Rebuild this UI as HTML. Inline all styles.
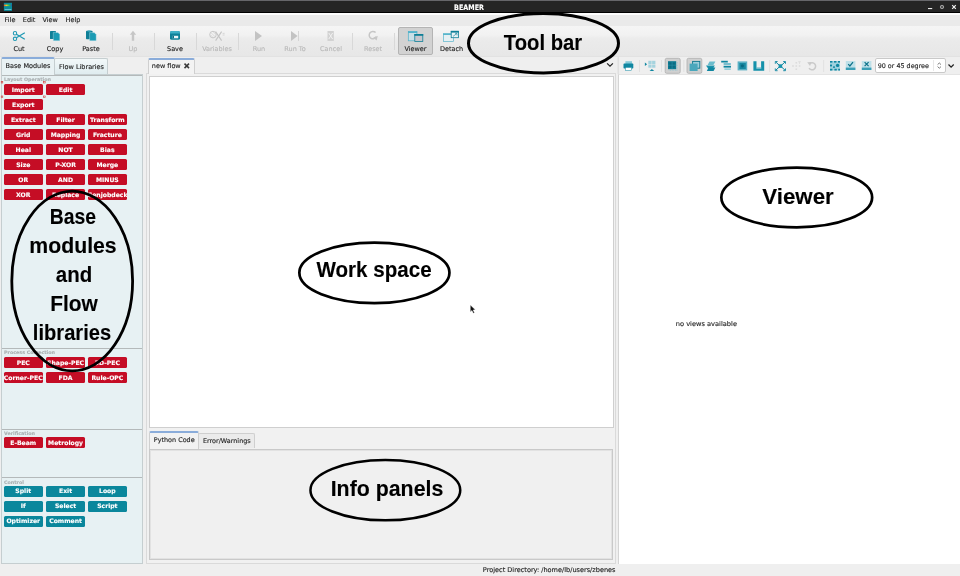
<!DOCTYPE html>
<html><head><meta charset="utf-8"><title>BEAMER</title>
<style>
html,body{margin:0;padding:0;}
body{will-change:transform;width:960px;height:576px;overflow:hidden;position:relative;background:#efefef;font-family:"DejaVu Sans","Liberation Sans",sans-serif;font-size:6.5px;color:#1c1c1c;-webkit-text-stroke:0.12px currentColor;}
.a{position:absolute;}
.t{position:absolute;white-space:nowrap;line-height:8px;}
.c{text-align:center;}
#title{left:0;top:0;width:960px;height:12.8px;background:#252525;border-top:1px solid #66666a;border-bottom:1px solid #000;box-sizing:border-box;}
#menubar{left:0;top:12.8px;width:960px;height:13px;background:#eaeaea;border-top:2px solid #fdfdfd;box-sizing:border-box;}
.tb{position:absolute;top:45px;width:36px;text-align:center;line-height:8px;font-size:6.5px;color:#222;}
.tb.d{color:#b9b9b9;}
.sep{position:absolute;top:33px;width:1px;height:17px;background:#d8d8d8;}
.mb{position:absolute;width:38.5px;height:11px;border-radius:1.5px;background:#c50d25;color:#fff;font-weight:bold;font-size:6.1px;line-height:11.5px;display:flex;justify-content:center;white-space:nowrap;overflow:hidden;}
.mb.tl{background:#0a879c;height:11px;line-height:10.8px;}
.sl{position:absolute;left:4px;font-size:4.8px;font-weight:bold;color:#aab0b2;line-height:6px;white-space:nowrap;}
.hr{position:absolute;left:2px;width:139.6px;height:1.1px;background:#b4b9ba;}
.lab{position:absolute;font-family:"Liberation Sans",sans-serif;font-weight:bold;color:#000;white-space:nowrap;text-align:center;}
</style></head><body>
<!-- title bar -->
<div class="a" id="title"></div>
<div class="t" style="left:438.8px;top:3.9px;width:60px;text-align:center;color:#fff;font-weight:bold;font-size:7.4px;transform:scaleX(0.865);">BEAMER</div>
<!-- menubar -->
<div class="a" id="menubar"></div>
<div class="t" style="left:4.5px;top:16px;">File</div>
<div class="t" style="left:22.8px;top:16px;">Edit</div>
<div class="t" style="left:42.5px;top:16px;">View</div>
<div class="t" style="left:65.5px;top:16px;">Help</div>
<!-- toolbar -->
<div class="a" id="toolbar" style="left:0;top:25.8px;width:960px;height:31px;background:linear-gradient(#f5f5f5 0%,#f2f2f2 28%,#ececec 40%,#eaeaea 52%,#e7e7e7 100%);"></div>
<div class="a" style="left:398px;top:27px;width:35px;height:28px;background:#d2d2d2;border:1px solid #b4b4b4;border-radius:2px;box-sizing:border-box;"></div>
<div class="tb" style="left:1px;">Cut</div>
<div class="tb" style="left:37px;">Copy</div>
<div class="tb" style="left:73px;">Paste</div>
<div class="sep" style="left:112px;"></div>
<div class="tb d" style="left:115px;">Up</div>
<div class="sep" style="left:154px;"></div>
<div class="tb" style="left:157px;">Save</div>
<div class="sep" style="left:196px;"></div>
<div class="tb d" style="left:199px;">Variables</div>
<div class="sep" style="left:238px;"></div>
<div class="tb d" style="left:241px;">Run</div>
<div class="tb d" style="left:277px;">Run To</div>
<div class="tb d" style="left:313px;">Cancel</div>
<div class="sep" style="left:352px;"></div>
<div class="tb d" style="left:355px;">Reset</div>
<div class="sep" style="left:394px;"></div>
<div class="tb" style="left:397.5px;">Viewer</div>
<div class="tb" style="left:433.5px;">Detach</div>

<!-- left panel -->
<div class="a" id="lpanel" style="left:1px;top:73.6px;width:141.6px;height:490.6px;background:#e7f1f3;border:1px solid #c5ced0;box-sizing:border-box;"></div>
<div class="a" style="left:54px;top:58.4px;width:54.4px;height:15.4px;background:linear-gradient(#f2f8f9,#dfecef);border:1px solid #c5ced0;border-bottom:none;border-radius:2px 2px 0 0;box-sizing:border-box;"></div>
<div class="a" style="left:1px;top:57.3px;width:54px;height:17.4px;background:#e9f2f4;border:1px solid #c5ced0;border-top:2px solid #8aacda;border-bottom:none;border-radius:2px 2px 0 0;box-sizing:border-box;"></div>
<div class="t" style="left:5.5px;top:61.5px;">Base Modules</div>
<div class="t" style="left:59px;top:62.5px;">Flow Libraries</div>

<div class="hr" style="top:75px;"></div>
<div class="sl" style="top:76.7px;">Layout Operation</div>
<div class="mb" style="left:4px;top:83.7px;">Import</div>
<div class="mb" style="left:46.3px;top:83.7px;">Edit</div>
<div class="mb" style="left:4px;top:98.7px;">Export</div>
<div class="mb" style="left:4px;top:113.7px;">Extract</div>
<div class="mb" style="left:46.3px;top:113.7px;">Filter</div>
<div class="mb" style="left:88.1px;top:113.7px;">Transform</div>
<div class="mb" style="left:4px;top:128.7px;">Grid</div>
<div class="mb" style="left:46.3px;top:128.7px;">Mapping</div>
<div class="mb" style="left:88.1px;top:128.7px;">Fracture</div>
<div class="mb" style="left:4px;top:143.7px;">Heal</div>
<div class="mb" style="left:46.3px;top:143.7px;">NOT</div>
<div class="mb" style="left:88.1px;top:143.7px;">Bias</div>
<div class="mb" style="left:4px;top:158.7px;">Size</div>
<div class="mb" style="left:46.3px;top:158.7px;">P-XOR</div>
<div class="mb" style="left:88.1px;top:158.7px;">Merge</div>
<div class="mb" style="left:4px;top:173.7px;">OR</div>
<div class="mb" style="left:46.3px;top:173.7px;">AND</div>
<div class="mb" style="left:88.1px;top:173.7px;">MINUS</div>
<div class="mb" style="left:4px;top:188.7px;">XOR</div>
<div class="mb" style="left:46.3px;top:188.7px;">Replace</div>
<div class="mb" style="left:88.1px;top:188.7px;">Genjobdeck</div>

<div class="hr" style="top:348px;"></div>
<div class="sl" style="top:350px;">Process Correction</div>
<div class="mb" style="left:4px;top:356.7px;">PEC</div>
<div class="mb" style="left:46.3px;top:356.7px;">Shape-PEC</div>
<div class="mb" style="left:88.1px;top:356.7px;">3D-PEC</div>
<div class="mb" style="left:4px;top:371.7px;">Corner-PEC</div>
<div class="mb" style="left:46.3px;top:371.7px;">FDA</div>
<div class="mb" style="left:88.1px;top:371.7px;">Rule-OPC</div>

<div class="hr" style="top:429px;"></div>
<div class="sl" style="top:431px;">Verification</div>
<div class="mb" style="left:4px;top:437.3px;">E-Beam</div>
<div class="mb" style="left:46.3px;top:437.3px;">Metrology</div>

<div class="hr" style="top:477.3px;"></div>
<div class="sl" style="top:479.5px;">Control</div>
<div class="mb tl" style="left:4px;top:486.1px;">Split</div>
<div class="mb tl" style="left:46.3px;top:486.1px;">Exit</div>
<div class="mb tl" style="left:88.1px;top:486.1px;">Loop</div>
<div class="mb tl" style="left:4px;top:501.1px;">If</div>
<div class="mb tl" style="left:46.3px;top:501.1px;">Select</div>
<div class="mb tl" style="left:88.1px;top:501.1px;">Script</div>
<div class="mb tl" style="left:4px;top:516.1px;">Optimizer</div>
<div class="mb tl" style="left:46.3px;top:516.1px;">Comment</div>

<!-- workspace -->
<div class="a" style="left:146px;top:73px;width:470.4px;height:491px;border:1px solid #dadada;box-sizing:border-box;background:#f1f1f1;"></div>
<div class="a" style="left:148px;top:57.8px;width:47px;height:16.2px;background:#f3f3f3;border:1px solid #cfcfcf;border-top:2px solid #8aacda;border-bottom:none;border-radius:2px 2px 0 0;box-sizing:border-box;"></div>
<div class="t" style="left:151.8px;top:61.5px;">new flow</div>
<div class="a" id="canvas" style="left:148.5px;top:75.8px;width:465.1px;height:352.4px;background:#fff;border:1.2px solid #cfcfcf;box-sizing:border-box;"></div>

<!-- info panel -->
<div class="a" style="left:198px;top:433px;width:56.5px;height:15px;background:#ebebeb;border:1px solid #cfcfcf;border-bottom:none;border-radius:2px 2px 0 0;box-sizing:border-box;"></div>
<div class="a" style="left:148.5px;top:431.2px;width:50.2px;height:18px;background:#f2f2f2;border:1px solid #cfcfcf;border-top:2px solid #8aacda;border-bottom:none;border-radius:2px 2px 0 0;box-sizing:border-box;"></div>
<div class="t" style="left:153.8px;top:436px;font-size:6.45px;">Python Code</div>
<div class="t" style="left:203px;top:436.8px;font-size:6.45px;">Error/Warnings</div>
<div class="a" style="left:148.6px;top:448.6px;width:464.6px;height:111.6px;background:#f0f0f0;border:1.4px solid #c9c9c9;box-sizing:border-box;box-shadow:inset 0 0 0 1px #e2e2e2;"></div>

<!-- viewer -->
<div class="a" id="viewer" style="left:617.6px;top:73.6px;width:343px;height:490.6px;background:#fff;border-left:1.4px solid #d4d4d4;border-top:1px solid #e4e4e4;box-sizing:border-box;"></div>
<div class="a" style="left:0;top:56.4px;width:960px;height:0.8px;background:#e2e2e2;"></div>
<div class="t" style="left:675.8px;top:319.8px;font-size:6.65px;">no views available</div>
<div class="a" style="left:875px;top:58px;width:70.5px;height:15px;background:#fff;border:1px solid #c9c9c9;border-radius:2px;box-sizing:border-box;"></div>
<div class="t" style="left:877.7px;top:61.5px;font-size:6.4px;">90 or 45 degree</div>

<!-- status -->
<div class="t" style="left:482.8px;top:566px;font-size:6.55px;">Project Directory: /home/lb/users/zbenes</div>


<!-- icons -->
<svg class="a" style="left:0;top:0;" width="960" height="576" viewBox="0 0 960 576">
<!-- app icon -->
<defs><linearGradient id="rb" x1="0" x2="1" y1="0" y2="0"><stop offset="0" stop-color="#e8402a"/><stop offset="0.3" stop-color="#f0d020"/><stop offset="0.65" stop-color="#30c040"/><stop offset="1" stop-color="#2050c0"/></linearGradient></defs>
<rect x="3.9" y="2.8" width="8.1" height="8.1" fill="#0a8b9c"/>
<rect x="3.9" y="4.6" width="8.1" height="1.5" fill="url(#rb)"/>
<rect x="4.6" y="9" width="6.8" height="0.9" fill="#6cc3d0"/>
<!-- window controls -->
<rect x="928" y="8" width="4.2" height="1.1" fill="#e8e8e8"/>
<circle cx="942" cy="7" r="1.7" fill="#555" stroke="#a0a0a0" stroke-width="1"/>
<path d="M952.2 5.2 L955.8 8.8 M955.8 5.2 L952.2 8.8" stroke="#f0f0f0" stroke-width="1.2" fill="none"/>
<!-- cut -->
<g fill="none" stroke="#1c98b3" stroke-width="1.05">
<circle cx="15" cy="33.2" r="1.7"/><circle cx="15" cy="38.8" r="1.7"/>
<path d="M16.4 34.3 L24.8 39.3 M16.4 37.7 L24.8 32.7" stroke-width="1.2"/>
</g>
<!-- copy -->
<rect x="50" y="31" width="6" height="8" rx="0.6" fill="#0f7f97"/>
<path d="M53.3 32.4 h4.6 l1.9 1.9 v6.4 h-6.5 z" fill="#1b9bb4" stroke="#dfeef2" stroke-width="0.35"/>
<!-- paste -->
<rect x="86" y="30.8" width="6.6" height="8.4" rx="0.8" fill="#0f7f97"/>
<rect x="87.6" y="30.4" width="3" height="1.3" fill="#37a9c0"/>
<path d="M89.6 32.6 h4.7 l1.9 1.9 v6.3 h-6.6 z" fill="#1b9bb4" stroke="#dfeef2" stroke-width="0.35"/>
<!-- up -->
<path d="M133 30.8 L136.2 34.8 L134.2 34.8 L134.2 40.8 L131.8 40.8 L131.8 34.8 L129.8 34.8 Z" fill="#c6c6c6"/>
<!-- save -->
<rect x="170" y="31" width="10" height="8.8" rx="1.6" fill="#0e8198"/>
<path d="M171.6 31 h6.8 a1.6 1.6 0 0 1 1.6 1.6 v0.9 h-10 v-0.9 a1.6 1.6 0 0 1 1.6 -1.6z" fill="#3fb0c6"/>
<rect x="172.4" y="35.8" width="5.8" height="2.5" fill="#eef6f8"/>
<rect x="172.4" y="35.8" width="1.6" height="2.5" fill="#0a6f86"/>
<!-- variables -->
<g fill="none" stroke="#c4c4c4">
<circle cx="213" cy="34.6" r="3.3" stroke-width="0.9"/>
<path d="M210.8 32.5 L215.2 36.8 M210.3 34.6 L213 37.6 M212.8 31.6 L216 34.6" stroke-width="0.5"/>
<path d="M215.6 31.6 L221.6 40.6 M221.6 31.6 L215.6 40.6" stroke-width="1.1"/>
<path d="M222.6 33.4 h2 M222.6 35 h2" stroke-width="0.6"/>
</g>
<!-- run -->
<path d="M255 31 L262 36 L255 41 Z" fill="#c3c3c3"/>
<!-- run to -->
<path d="M291 31 L297.6 36 L291 41 Z" fill="#c3c3c3"/>
<rect x="298.2" y="31" width="0.8" height="10" fill="#cfcfcf"/>
<!-- cancel -->
<rect x="327.5" y="31" width="6.3" height="10" fill="#d2d2d2"/>
<path d="M328.8 33 L332.6 39 M332.6 33 L328.8 39" stroke="#f2f2f2" stroke-width="1" fill="none"/>
<!-- reset -->
<path d="M375.6 32.6 A3.7 3.7 0 1 0 376.3 36.6" fill="none" stroke="#c6c6c6" stroke-width="1.5"/>
<path d="M373.2 37.6 L377.8 36 L376.6 40.6 Z" fill="#c6c6c6"/>
<!-- viewer icon -->
<rect x="408.3" y="31.6" width="8.6" height="9.2" fill="#c9dfe6" stroke="#4fb0c8" stroke-width="0.7"/>
<rect x="408" y="31.3" width="9.2" height="1.7" fill="#52b3cb"/>
<rect x="414.8" y="34.4" width="8" height="7" fill="#c6c6cc" stroke="#0e7f97" stroke-width="0.8"/>
<rect x="414.4" y="34" width="8.8" height="1.8" fill="#0e7f97"/>
<!-- detach icon -->
<rect x="443.4" y="33.8" width="10.2" height="7.6" fill="#e6f0f3" stroke="#5ab6cc" stroke-width="0.7"/>
<rect x="443" y="33.4" width="11" height="1.6" fill="#5ab6cc"/>
<rect x="451.2" y="31.3" width="7.2" height="6.4" fill="#e9f3f6" stroke="#0e7f97" stroke-width="0.8"/>
<rect x="450.8" y="30.9" width="8" height="1.7" fill="#0e7f97"/>
<path d="M453 36.4 L456.8 33.6 M455 33.4 h2 v2" stroke="#0e7f97" stroke-width="0.6" fill="none"/>

<!-- viewer toolbar icons -->
<!-- print -->
<rect x="625.4" y="61.2" width="6.6" height="2.8" fill="#86c9d8"/>
<rect x="623.5" y="63.6" width="9.8" height="5" rx="0.8" fill="#0f86a0"/>
<rect x="625.4" y="67.4" width="6.2" height="3.2" fill="#fff" stroke="#0f86a0" stroke-width="0.5"/>
<!-- icon2 -->
<path d="M644.9 62.5 L647.1 64.2 L644.9 65.9 Z" fill="#0f86a0"/>
<g fill="#a5d3de"><rect x="648.3" y="60.8" width="3.3" height="3.2"/><rect x="652.1" y="60.8" width="3.3" height="3.2"/><rect x="648.3" y="64.5" width="3.3" height="3.2"/><rect x="652.1" y="64.5" width="3.3" height="3.2"/></g>
<path d="M649.6 70.9 L651.9 68.9 L654.2 70.9 Z" fill="#0f86a0"/>
<!-- pressed 3 -->
<rect x="665.2" y="58.3" width="15" height="15" rx="1.5" fill="#d0d0d0" stroke="#adadad" stroke-width="0.8"/>
<rect x="668" y="61.2" width="8.2" height="8" fill="#0c7890"/>
<rect x="669.4" y="62.6" width="5.4" height="5.2" fill="#0a6a82"/>
<path d="M672.1 61.2 v8 M668 65.2 h8.2" stroke="#2b93aa" stroke-width="0.6" fill="none"/>
<path d="M677.2 62 v8.2 h-8.4" fill="none" stroke="#7dc2d2" stroke-width="0.7" stroke-dasharray="0.8 0.8"/>
<!-- pressed 4 -->
<rect x="687" y="58.3" width="14.8" height="15" rx="1.5" fill="#d0d0d0" stroke="#adadad" stroke-width="0.8"/>
<rect x="692.6" y="61.4" width="7.2" height="6.8" fill="#9ccddb" stroke="#0c7890" stroke-width="0.9"/>
<rect x="689.6" y="63.6" width="8" height="7.4" fill="#4aa7bc"/>
<!-- icon5 layers -->
<path d="M709.5 61.4 L715.4 61.4 L713.4 65 L707.6 65 Z" fill="#6bbccd"/>
<path d="M706 65.6 L714.8 65.6 L713 68.4 L708 68.4 Z" fill="#1a93ac"/>
<path d="M708.6 67.6 L715.4 67.6 L713.6 70.9 L706.8 70.9 Z" fill="#0f86a0"/>
<!-- icon6 -->
<rect x="721.2" y="60.8" width="6.6" height="1.7" fill="#0f86a0"/>
<rect x="723.6" y="63.2" width="7.2" height="1.6" fill="#5cb3c7"/>
<rect x="723.6" y="65.8" width="7.4" height="1.8" fill="#0f86a0"/>
<rect x="724.4" y="68.4" width="6.4" height="1.5" fill="#8fcbd9"/>
<!-- icon7 -->
<rect x="737.6" y="61.4" width="9.6" height="9" fill="#5ab0c4"/>
<rect x="739.4" y="63" width="6.4" height="6" fill="#1788a1"/>
<circle cx="742.4" cy="65.8" r="1.6" fill="#0a6a82"/>
<!-- icon8 U -->
<path d="M753.4 61.2 h3.1 v6.4 h4.6 v-6.4 h3.1 v9.6 h-10.8 z" fill="#1591aa"/>
<rect x="756.3" y="67.6" width="5" height="0.9" fill="#cfe8ee"/>
<!-- sep -->
<!-- icon9 zoom fit -->
<g stroke="#0f86a0" stroke-width="1" fill="none">
<path d="M775.8 62 L779.2 65.2 M785 62 L781.6 65.2 M775.8 70.2 L779.2 67 M785 70.2 L781.6 67"/>
<path d="M775.3 63.8 v-2.3 h2.3 M783.2 61.5 h2.3 v2.3 M775.3 68.4 v2.3 h2.3 M783.2 70.7 h2.3 v-2.3" stroke-width="0.9"/>
</g>
<rect x="778.6" y="64.3" width="3.6" height="3.6" fill="#1591aa"/>
<!-- icon10 disabled -->
<g fill="#dcdcdc"><rect x="795.5" y="62" width="1.6" height="1.6"/><rect x="795.5" y="65.2" width="1.6" height="1.6"/><rect x="795.5" y="68.4" width="1.6" height="1.6"/><rect x="792.2" y="65.2" width="1.6" height="1.6"/><rect x="798.8" y="65.2" width="1.6" height="1.6"/><rect x="798" y="61.4" width="3" height="0.8"/><rect x="799.2" y="61.4" width="0.8" height="2.6"/></g>
<!-- icon11 undo disabled -->
<path d="M809.6 63.6 A3.6 3.6 0 1 1 809 68.2" fill="none" stroke="#cacaca" stroke-width="1.5"/>
<path d="M807.2 62.2 L811.6 62 L810 66 Z" fill="#cacaca"/>
<!-- icon12 -->
<rect x="830" y="61" width="10" height="9.5" fill="#9fd2de"/>
<g fill="#0f86a0"><rect x="830" y="61" width="2.4" height="1.6"/><rect x="834" y="61" width="2.4" height="1.6"/><rect x="838" y="61" width="2" height="1.6"/><rect x="830" y="64.6" width="2" height="1.8"/><rect x="830" y="68.8" width="2.4" height="1.7"/><rect x="834.4" y="68.8" width="2.4" height="1.7"/><rect x="838.2" y="68.8" width="1.8" height="1.7"/><circle cx="837.6" cy="65.4" r="1.7"/><rect x="833" y="66.4" width="2" height="1.4"/></g>
<!-- icon13 check -->
<rect x="845.8" y="61" width="9.6" height="9" fill="#bfe0e8"/>
<rect x="845.8" y="67.6" width="9.6" height="2.4" fill="#3b9fb6"/>
<path d="M848.2 64.2 L849.9 66 L853 62.2" fill="none" stroke="#0b7189" stroke-width="1.2"/>
<!-- icon14 X -->
<rect x="861.8" y="61" width="9.6" height="9" fill="#bfe0e8"/>
<rect x="861.8" y="67.6" width="9.6" height="2.4" fill="#3b9fb6"/>
<path d="M864.6 62.2 L868.6 66.2 M868.6 62.2 L864.6 66.2" fill="none" stroke="#0b7189" stroke-width="1.2"/>
<!-- viewer toolbar separators -->
<g fill="#dedede"><rect x="639.2" y="60" width="0.8" height="12"/><rect x="661" y="60" width="0.8" height="12"/><rect x="683.5" y="60" width="0.8" height="12"/><rect x="769.3" y="60" width="0.8" height="12"/><rect x="823.3" y="60" width="0.8" height="12"/></g>
<!-- combo arrows -->
<rect x="933.3" y="60" width="0.7" height="11" fill="#dedede"/>
<path d="M937.6 64.6 L939.3 63 L941 64.6 M937.6 66.6 L939.3 68.2 L941 66.6" fill="none" stroke="#444" stroke-width="0.7"/>
<path d="M948.5 64.5 L951.1 67.2 L953.7 64.5" fill="none" stroke="#222" stroke-width="1.25"/>
<rect x="617.6" y="57.2" width="1.2" height="17" fill="#dcdcdc"/>
<!-- tab overflow chevron -->
<path d="M607.1 63.4 L610 66.2 L612.9 63.4" fill="none" stroke="#222" stroke-width="1.25"/>
<!-- tab close -->
<path d="M184.5 63.6 L189 68.1 M189 63.6 L184.5 68.1" fill="none" stroke="#3a3a3a" stroke-width="1.5"/>
<!-- selection handles around Import -->
<g fill="none" stroke="#d03a3a" stroke-width="0.6"><rect x="1.2" y="81.4" width="1.6" height="1.6"/><rect x="43.6" y="81.4" width="1.6" height="1.6"/><rect x="1.2" y="96" width="1.6" height="1.6"/><rect x="43.6" y="96" width="1.6" height="1.6"/></g>
<!-- cursor -->
<path d="M470.3 304.9 L470.3 311.9 L471.9 310.5 L473.3 313.3 L474.5 312.7 L473.1 310 L475.3 309.8 Z" fill="#111" stroke="#fff" stroke-width="0.4"/>
</svg>

<!-- callouts -->
<svg class="a" style="left:0;top:0;" width="960" height="576" viewBox="0 0 960 576">
<g fill="none" stroke="#000">
<ellipse cx="543.5" cy="43.2" rx="75" ry="29.7" stroke-width="3"/>
<ellipse cx="374.4" cy="272.8" rx="75.05" ry="30.25" stroke-width="2.7"/>
<ellipse cx="385.35" cy="490.15" rx="74.9" ry="30.2" stroke-width="2.5"/>
<ellipse cx="796.75" cy="197.45" rx="75.4" ry="29.9" stroke-width="2.7"/>
<ellipse cx="72.2" cy="281" rx="60.4" ry="89.9" stroke-width="2.8"/>
</g>
</svg>
<div class="lab" id="l1" style="left:463.0px;top:29.7px;width:160px;font-size:22px;line-height:26px;transform:scaleX(0.92);">Tool bar</div>
<div class="lab" id="l2" style="left:293.7px;top:256.9px;width:160px;font-size:22px;line-height:26px;transform:scaleX(0.936);">Work space</div>
<div class="lab" id="l3" style="left:306.8px;top:476.4px;width:160px;font-size:22px;line-height:26px;transform:scaleX(0.97);">Info panels</div>
<div class="lab" id="l4" style="left:717.5px;top:183.8px;width:160px;font-size:22px;line-height:26px;transform:scaleX(1.013);">Viewer</div>
<div class="lab" id="l5a" style="left:-6.7px;top:203.8px;width:160px;font-size:22px;line-height:26px;transform:scaleX(0.88);">Base</div>
<div class="lab" id="l5b" style="left:-6.7px;top:232.6px;width:160px;font-size:22px;line-height:26px;transform:scaleX(0.965);">modules</div>
<div class="lab" id="l5c" style="left:-6.5px;top:261.6px;width:160px;font-size:22px;line-height:26px;transform:scaleX(0.93);">and</div>
<div class="lab" id="l5d" style="left:-6.1px;top:291.1px;width:160px;font-size:22px;line-height:26px;transform:scaleX(0.95);">Flow</div>
<div class="lab" id="l5e" style="left:-7.8px;top:319.8px;width:160px;font-size:22px;line-height:26px;transform:scaleX(0.915);">libraries</div>
</body></html>
